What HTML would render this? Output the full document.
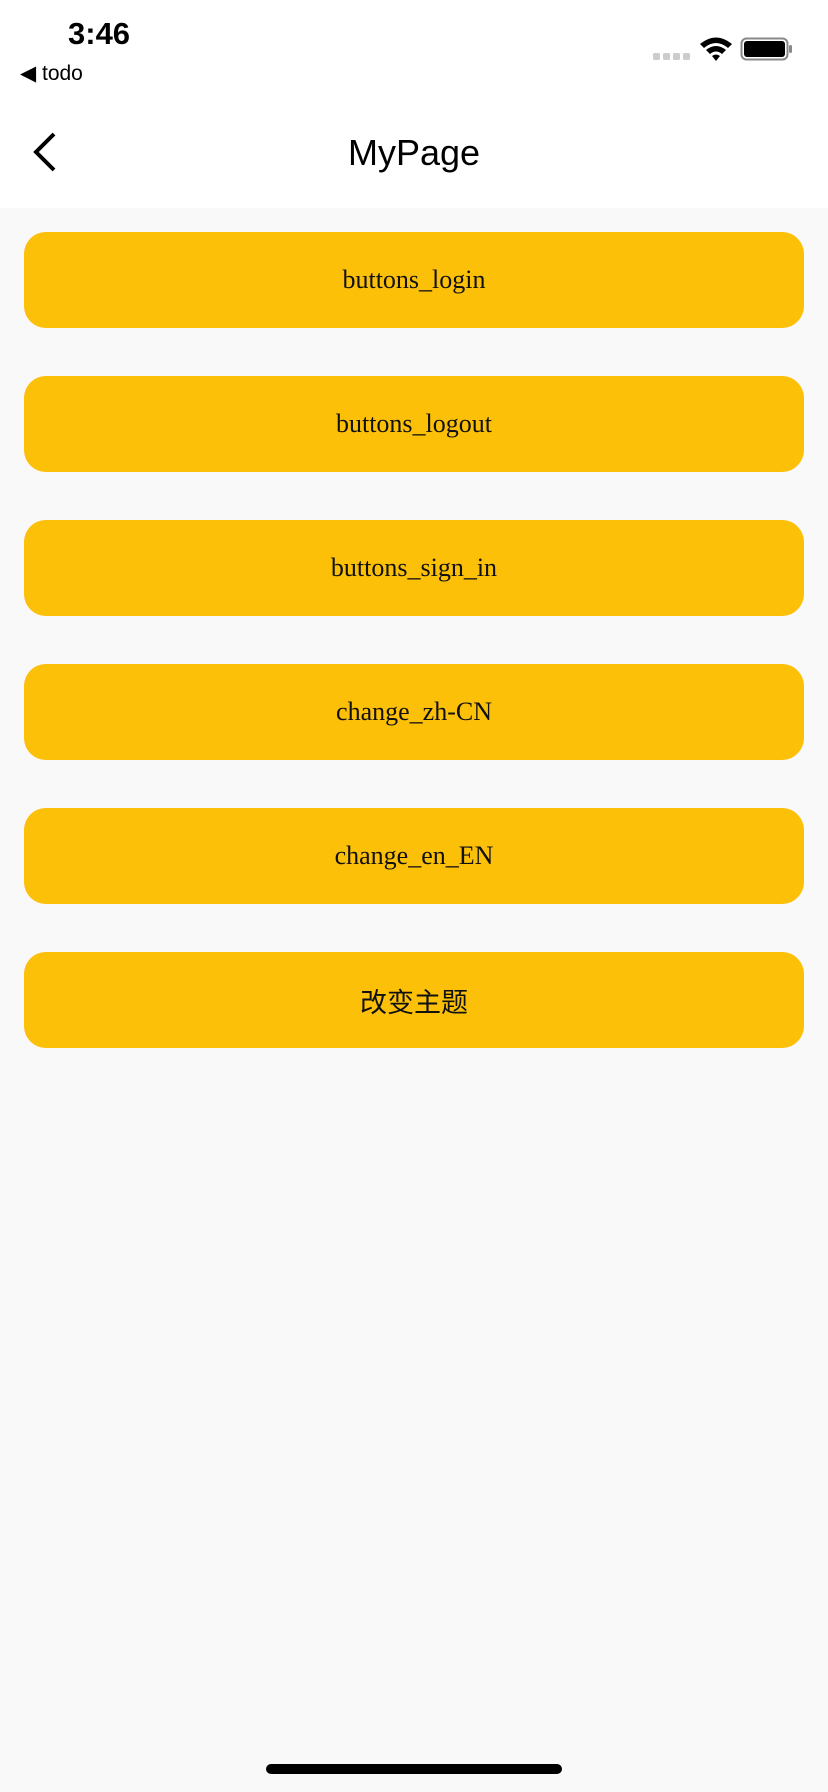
<!DOCTYPE html>
<html><head><meta charset="utf-8"><style>
body{margin:0;width:828px;height:1792px;background:#f9f9f9;position:relative;overflow:hidden;font-family:"Liberation Sans",sans-serif}
.hdr{position:absolute;left:0;top:0;width:828px;height:208px;background:#fff}
.time{position:absolute;left:68px;top:16px;font-size:31px;font-weight:bold;color:#000}
.todo{position:absolute;left:20px;top:61px;font-size:21px;color:#000}
.title{position:absolute;left:0;width:828px;top:132px;text-align:center;font-size:36px;color:#000}
.btn{position:absolute;left:24px;width:780px;height:96px;border-radius:22px;background:#fdc008;display:flex;align-items:center;justify-content:center;font-family:"Liberation Serif","Noto Serif CJK SC",serif;font-size:26px;color:#111}
.cjk{font-family:"Liberation Sans","Noto Sans CJK SC",sans-serif;font-size:27px}
.home{position:absolute;left:266px;top:1764px;width:296px;height:10px;border-radius:5px;background:#000}
</style></head><body>
<div class="hdr"></div>
<div class="time">3:46</div>
<div class="todo">◀ todo</div>
<svg style="position:absolute;left:650px;top:34px" width="145" height="30" viewBox="0 0 145 30">
<rect x="3" y="19" width="7" height="7" rx="1.5" fill="#ccc"/><rect x="13" y="19" width="7" height="7" rx="1.5" fill="#ccc"/><rect x="23" y="19" width="7" height="7" rx="1.5" fill="#ccc"/><rect x="33" y="19" width="7" height="7" rx="1.5" fill="#ccc"/>
<path d="M50 10 Q66 -3 82 10 L78 14 Q66 4 54 14Z M56 16 Q66 8 76 16 L72 20 Q66 15 60 20Z M62 22 Q66 19 70 22 L66 27Z" fill="#000"/>
<rect x="91.5" y="4.5" width="46" height="21" rx="5" fill="none" stroke="#888" stroke-width="2"/>
<rect x="94" y="7" width="41" height="16" rx="3" fill="#000"/>
<rect x="139" y="11" width="3" height="8" rx="1.5" fill="#888"/>
</svg>
<svg style="position:absolute;left:30px;top:132px" width="30" height="40" viewBox="0 0 30 40"><path d="M24 2 L6 20 L24 38" fill="none" stroke="#000" stroke-width="4"/></svg>
<div class="title">MyPage</div>
<div class="btn" style="top:232px">buttons_login</div>
<div class="btn" style="top:376px">buttons_logout</div>
<div class="btn" style="top:520px">buttons_sign_in</div>
<div class="btn" style="top:664px">change_zh-CN</div>
<div class="btn" style="top:808px">change_en_EN</div>
<div class="btn cjk" style="top:952px">改变主题</div>
<div class="home"></div>
</body></html>
